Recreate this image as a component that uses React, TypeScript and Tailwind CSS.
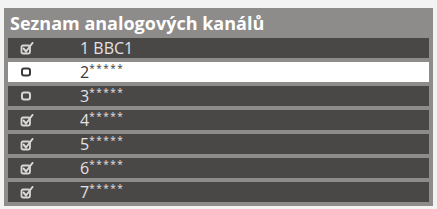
import React from "react";

type Channel = { num: string; name?: string; checked: boolean };

const channels: Channel[] = [
	{ num: "1", name: "BBC1", checked: true },
	{ num: "2", checked: false },
	{ num: "3", checked: false },
	{ num: "4", checked: true },
	{ num: "5", checked: true },
	{ num: "6", checked: true },
	{ num: "7", checked: true },
];

function CheckIcon({ checked, dark }: { checked: boolean; dark: boolean }) {
	const color = dark ? "#3a3838" : "#d9d7d7";
	if (!checked) {
		return (
			<svg width="12" height="12" viewBox="0 0 12 12">
				<rect x="2" y="2.5" width="8" height="7" rx="2" fill="none" stroke={color} strokeWidth="2" />
			</svg>
		);
	}
	return (
		<svg width="14" height="13" viewBox="0 0 14 13">
			<rect x="1.5" y="3.5" width="8.5" height="8" rx="1.5" fill="none" stroke={color} strokeWidth="1.8" />
			<path d="M3.5 6.5 L6 9.5 L12.5 1" fill="none" stroke={color} strokeWidth="2" strokeLinecap="round" />
		</svg>
	);
}

export default function App() {
	return (
		<div className="w-[437px] h-[209px] bg-[#f3f3f3] pt-[8px] px-[4px] font-['Open_Sans',sans-serif]">
			<div className="bg-[#8e8b8b] px-[4px] pb-[4px]">
				<div className="h-[30px] flex items-center pl-[2px] text-[18px] font-bold text-white leading-none">
					Seznam analogových kanálů
				</div>
				<div className="flex flex-col gap-[4px]">
					{channels.map((ch, i) => {
						const selected = i === 1;
						return (
							<div
								key={ch.num}
								className={`h-[20px] flex items-center ${
									selected ? "bg-white text-[#3c3a3a]" : "bg-[#4a4747] text-[#e4e2e2]"
								}`}
							>
								<div className="w-[72px] pl-[12px] flex items-center">
									<CheckIcon checked={ch.checked} dark={selected} />
								</div>
								<div className="text-[16px] leading-none flex items-start">
									{ch.name ? (
										<span>
											{ch.num} {ch.name}
										</span>
									) : (
										<>
											<span>{ch.num}</span>
											<span className="text-[10px] tracking-[1.5px] -mt-[1px]">*****</span>
										</>
									)}
								</div>
							</div>
						);
					})}
				</div>
			</div>
		</div>
	);
}
